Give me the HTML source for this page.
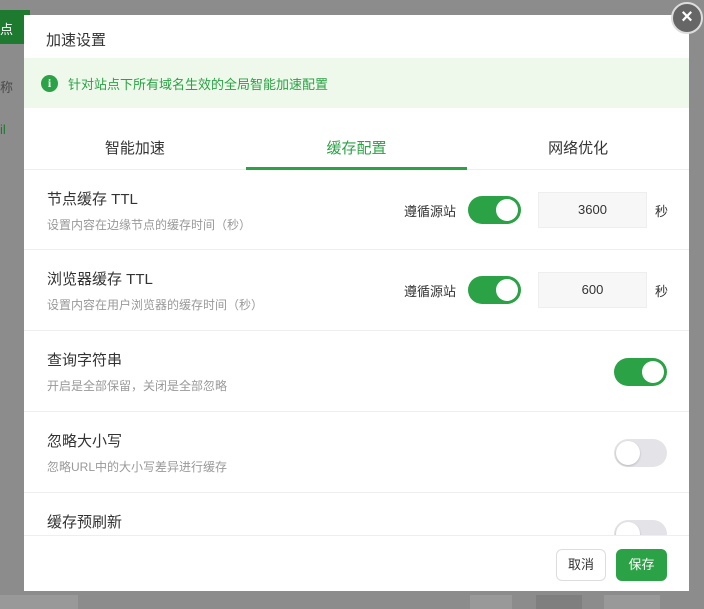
<!DOCTYPE html>
<html><head><meta charset="utf-8"><style>
*{box-sizing:border-box;margin:0;padding:0}
body{width:704px;height:606px;overflow:hidden;background:#8c8c8c;font-family:"Liberation Sans","Noto Sans CJK SC",sans-serif;position:relative}
.bg{position:absolute;color:#4a4a4a;font-size:13px}
.modal{position:absolute;left:24px;top:15px;width:665px;height:576px;background:#fff;overflow:hidden}
.hd{height:43px;padding:14px 0 0 22px;font-size:15px;color:#333}
.alert{height:50px;background:#eef8eb;display:flex;align-items:center;padding-left:17px;color:#2ba245;font-size:13px}
.alert i{width:17px;height:17px;border-radius:50%;background:#2ba245;color:#fff;font-style:normal;font-weight:bold;font-size:12px;display:flex;align-items:center;justify-content:center;margin-right:10px;font-family:"Liberation Serif",serif}
.tabs{height:62px;display:flex;border-bottom:1px solid #eee;position:relative}
.tabs div{flex:1;text-align:center;padding-top:29px;font-size:15px;color:#333}
.tabs .on{color:#2ba245}
.tabs .bar{position:absolute;left:222px;width:221px;top:59px;height:3px;background:#2ba245;padding:0;flex:none}
.row{height:80px;border-bottom:1px solid #eee;position:relative;padding:18px 0 0 23px}
.row:nth-of-type(n+5){height:81px}
.t{font-size:15px;color:#333}
.s{font-size:12px;color:#999;margin-top:7px}
.tg{position:absolute;width:53px;height:28px;border-radius:14px;background:#2ba245}
.tg:after{content:"";position:absolute;top:3px;right:3px;width:22px;height:22px;border-radius:50%;background:#fff}
.tg.off{background:#e4e4e8}
.tg.off:after{left:2px;right:auto;width:24px;height:24px;top:2px;box-shadow:0 1px 2px rgba(0,0,0,.2)}
.lb{position:absolute;left:380px;top:31px;font-size:13px;color:#333}
.in{position:absolute;left:514px;top:22px;width:109px;height:36px;background:#f7f7f7;border:1px solid #eee;text-align:center;line-height:34px;font-size:13px;color:#333}
.sec{position:absolute;left:631px;top:31px;font-size:13px;color:#333}
.ft{position:absolute;left:0;top:520px;width:665px;height:56px;background:#fff;border-top:1px solid #eee}
.btn{position:absolute;top:13px;height:32px;border-radius:6px;font-size:13px;line-height:30px;text-align:center}
.close{position:absolute;left:671px;top:2px;width:32px;height:32px;border-radius:50%;background:#666;border:2px solid #ddd;color:#fff;font-size:20px;font-weight:bold;text-align:center;line-height:27px}
</style></head><body>
<div class="bg" style="left:0;top:10px;width:30px;height:34px;background:#1d7a2f;color:#fff;padding:9px 0 0 0">点</div>
<div class="bg" style="left:0;top:77px">称</div>
<div class="bg" style="left:0;top:122px;color:#1d7a2f">il</div>
<div class="bg" style="left:0;top:595px;width:78px;height:14px;border:1px solid #999;background:#999"></div>
<div class="bg" style="left:470px;top:595px;width:42px;height:14px;background:#999"></div>
<div class="bg" style="left:536px;top:595px;width:46px;height:14px;background:#7f7f7f"></div>
<div class="bg" style="left:604px;top:595px;width:56px;height:14px;background:#999"></div>
<div class="modal">
<div class="hd">加速设置</div>
<div class="alert"><i>i</i>针对站点下所有域名生效的全局智能加速配置</div>
<div class="tabs"><div>智能加速</div><div class="on">缓存配置</div><div>网络优化</div><span class="bar"></span></div>
<div class="row"><div class="t">节点缓存 TTL</div><div class="s">设置内容在边缘节点的缓存时间（秒）</div>
<span class="lb">遵循源站</span><span class="tg" style="left:444px;top:26px"></span><span class="in">3600</span><span class="sec">秒</span></div>
<div class="row"><div class="t">浏览器缓存 TTL</div><div class="s">设置内容在用户浏览器的缓存时间（秒）</div>
<span class="lb">遵循源站</span><span class="tg" style="left:444px;top:26px"></span><span class="in">600</span><span class="sec">秒</span></div>
<div class="row"><div class="t">查询字符串</div><div class="s">开启是全部保留，关闭是全部忽略</div><span class="tg" style="left:590px;top:27px"></span></div>
<div class="row"><div class="t">忽略大小写</div><div class="s">忽略URL中的大小写差异进行缓存</div><span class="tg off" style="left:590px;top:27px"></span></div>
<div class="row"><div class="t">缓存预刷新</div><span class="tg off" style="left:590px;top:27px"></span></div>
<div class="ft"><span class="btn" style="left:532px;width:50px;border:1px solid #ddd;color:#333">取消</span><span class="btn" style="left:592px;width:51px;background:#2ba245;color:#fff;line-height:32px">保存</span></div>
</div>
<div class="close">×</div>
</body></html>
